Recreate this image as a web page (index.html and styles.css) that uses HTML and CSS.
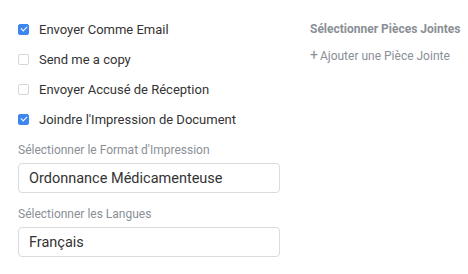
FILE: index.html
```html
<!DOCTYPE html>
<html lang="fr">
<head>
    <meta charset="UTF-8">
    <title>Envoi</title>
    <link rel="stylesheet" href="styles.css">
</head>
<body>
    <div class="wrap">
        <div class="left">
            <label class="check"><span class="box on"></span>Envoyer Comme Email</label>
            <label class="check"><span class="box"></span>Send me a copy</label>
            <label class="check"><span class="box"></span>Envoyer Accusé de Réception</label>
            <label class="check"><span class="box on"></span>Joindre l'Impression de Document</label>
            <div class="field">
                <div class="lbl">Sélectionner le Format d'Impression</div>
                <div class="input">Ordonnance Médicamenteuse</div>
            </div>
            <div class="field">
                <div class="lbl">Sélectionner les Langues</div>
                <div class="input">Français</div>
            </div>
        </div>
        <div class="right">
            <div class="title">Sélectionner Pièces Jointes</div>
            <div class="add"><span class="plus">+</span>Ajouter une Pièce Jointe</div>
        </div>
    </div>
</body>
</html>
```

FILE: styles.css
```css
body{
    margin: 0;
    padding: 0;
    background: #fff;
    font-family: Roboto, "Noto Sans", sans-serif;
    color: #333;
}
.wrap{
    display: flex;
    padding: 14px 0 0 18px;
}
.left{
    width: 262px;
    flex-shrink: 0;
}
.check{
    display: flex;
    align-items: center;
    height: 30px;
    font-size: 13px;
    color: #333;
}
.box{
    width: 9px;
    height: 9px;
    border: 1px solid #d3d7dc;
    border-radius: 2px;
    margin-right: 10px;
    flex-shrink: 0;
}
.box.on{
    background: #3d86f0;
    border-color: #3d86f0;
    position: relative;
}
.box.on::after{
    content: "";
    position: absolute;
    left: 2px;
    top: 1px;
    width: 5px;
    height: 3px;
    border-left: 1.6px solid #fff;
    border-bottom: 1.6px solid #fff;
    transform: rotate(-45deg);
}
.field{
    margin-top: 9px;
}
.field + .field{
    margin-top: 14px;
}
.lbl{
    font-size: 12px;
    color: #8a8f96;
    margin-bottom: 6px;
}
.input{
    height: 28px;
    border: 1px solid #d8dbe0;
    border-radius: 4px;
    padding: 0 10px;
    display: flex;
    align-items: center;
    font-size: 14.5px;
    color: #333;
}
.right{
    margin-left: 30px;
    padding-top: 8px;
    white-space: nowrap;
}
.title{
    font-size: 12px;
    font-weight: bold;
    color: #8a8f96;
}
.add{
    margin-top: 11px;
    font-size: 12px;
    color: #8a8f96;
}
.plus{
    font-size: 14px;
    margin-right: 2px;
}
```
